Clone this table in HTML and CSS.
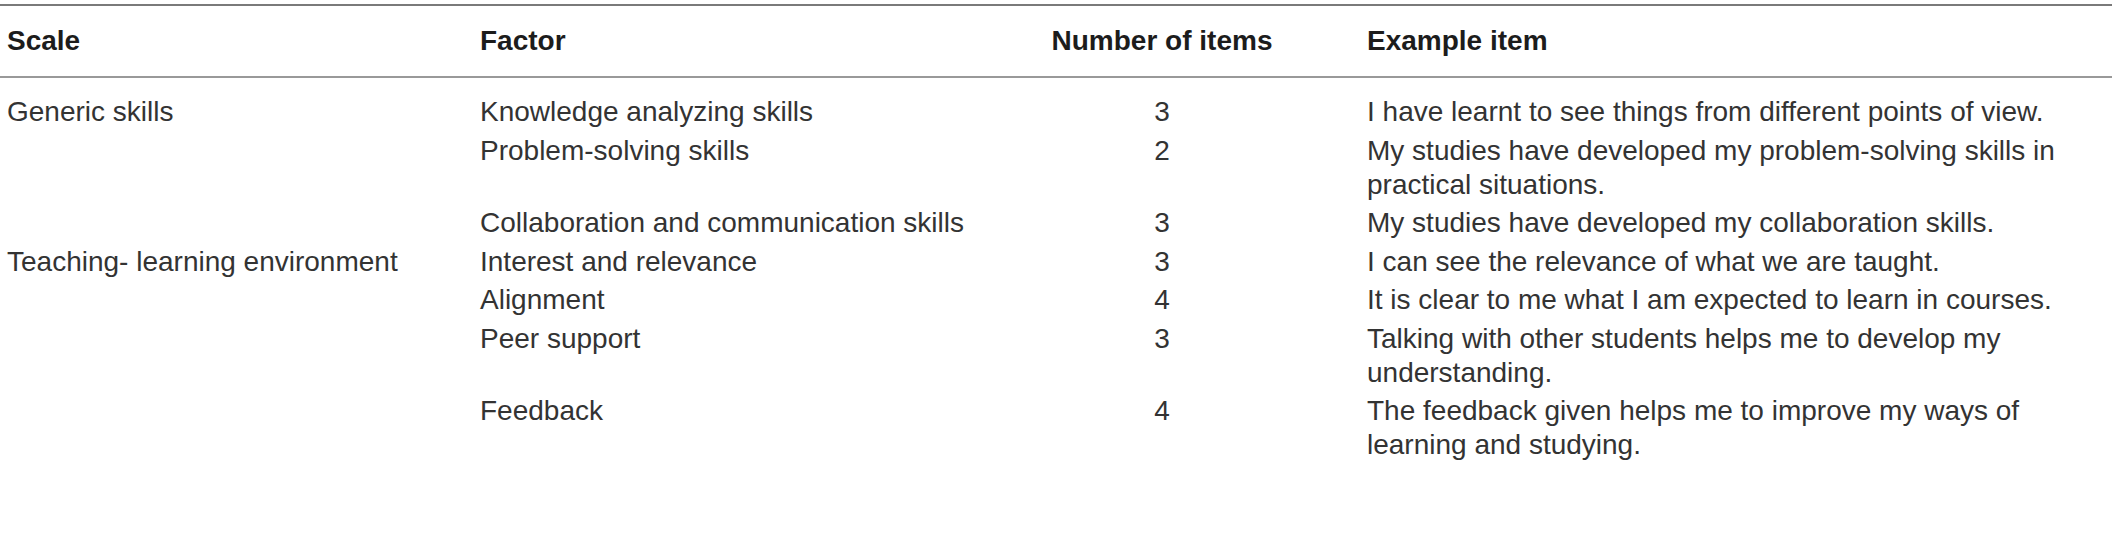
FILE: index.html
```html
<!DOCTYPE html>
<html lang="en">
<head>
<meta charset="utf-8">
<title>Scales and factors</title>
<link rel="stylesheet" href="styles.css">
</head>
<body>
<table class="data-table">
  <colgroup>
    <col class="col-scale">
    <col class="col-factor">
    <col class="col-count">
    <col class="col-example">
  </colgroup>
  <thead>
    <tr>
      <th>Scale</th>
      <th>Factor</th>
      <th class="num">Number of items</th>
      <th>Example item</th>
    </tr>
  </thead>
  <tbody>
    <tr>
      <td>Generic skills</td>
      <td>Knowledge analyzing skills</td>
      <td class="num">3</td>
      <td>I have learnt to see things from different points of view.</td>
    </tr>
    <tr>
      <td></td>
      <td>Problem-solving skills</td>
      <td class="num">2</td>
      <td>My studies have developed my problem-solving skills in practical situations.</td>
    </tr>
    <tr>
      <td></td>
      <td>Collaboration and communication skills</td>
      <td class="num">3</td>
      <td>My studies have developed my collaboration skills.</td>
    </tr>
    <tr>
      <td>Teaching- learning environment</td>
      <td>Interest and relevance</td>
      <td class="num">3</td>
      <td>I can see the relevance of what we are taught.</td>
    </tr>
    <tr>
      <td></td>
      <td>Alignment</td>
      <td class="num">4</td>
      <td>It is clear to me what I am expected to learn in courses.</td>
    </tr>
    <tr>
      <td></td>
      <td>Peer support</td>
      <td class="num">3</td>
      <td>Talking with other students helps me to develop my understanding.</td>
    </tr>
    <tr>
      <td></td>
      <td>Feedback</td>
      <td class="num">4</td>
      <td>The feedback given helps me to improve my ways of learning and studying.</td>
    </tr>
  </tbody>
</table>
</body>
</html>
```

FILE: styles.css
```css
html, body {
  margin: 0;
  padding: 0;
  background: #ffffff;
}

body {
  font-family: "Liberation Sans", Arial, Helvetica, sans-serif;
  font-size: 28px;
  line-height: 34px;
  color: #333333;
}

.data-table {
  margin-top: 4px;
  width: 2112px;
  table-layout: fixed;
  border-collapse: collapse;
  border-top: 2px solid #7a7a7a;
}

.col-scale { width: 473px; }
.col-factor { width: 491px; }
.col-count { width: 396px; }
.col-example { width: 752px; }

.data-table th,
.data-table td {
  padding: 2px 7px 2.5px;
  text-align: left;
  vertical-align: top;
}

.data-table th {
  font-weight: bold;
  color: #1c1c1c;
  padding-top: 18px;
  padding-bottom: 18px;
  border-bottom: 2px solid #999999;
}

.data-table tbody tr:first-child td {
  padding-top: 17px;
}

.data-table td:nth-child(2) {
  white-space: nowrap;
}

.data-table .num {
  text-align: center;
}
```
